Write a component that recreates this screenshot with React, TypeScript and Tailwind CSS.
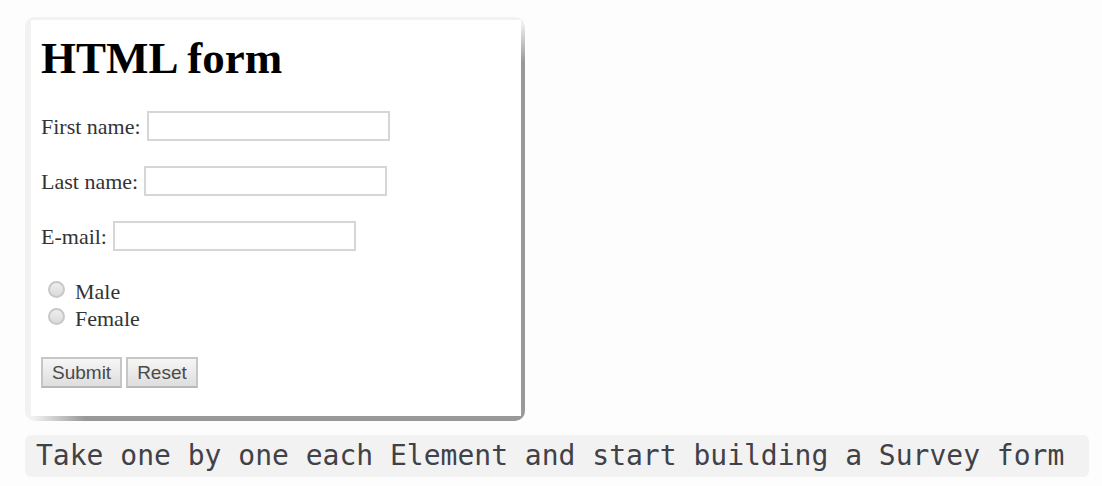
import type { ReactNode } from "react";

function TextField({ id, label }: { id: string; label: string }) {
  return (
    <div className="flex items-center gap-1.5">
      <label htmlFor={id}>{label}</label>
      <input
        id={id}
        name={id}
        type="text"
        className="h-[30px] w-[243px] min-w-0 border-2 border-[#d6d6d6] bg-white px-1 outline-none focus:border-[#8ab4f8]"
      />
    </div>
  );
}

function RadioOption({ value, label }: { value: string; label: string }) {
  return (
    <label className="flex items-center gap-2.5">
      <input
        type="radio"
        name="gender"
        value={value}
        className="mb-1 size-[17px] appearance-none rounded-full border-2 border-[#c8c8c8] bg-linear-to-b from-[#eeeeee] to-[#dadada] checked:border-4 checked:border-[#777777]"
      />
      {label}
    </label>
  );
}

function FormButton({ type, children }: { type: "submit" | "reset"; children: ReactNode }) {
  return (
    <button
      type={type}
      className="flex h-[31px] items-center border-2 border-[#c6c6c6] border-b-[#b8b8b8] bg-linear-to-b from-[#f6f6f6] to-[#dedede] px-[9px] font-['Liberation_Sans',sans-serif] text-[19px] leading-none text-[#4a4a4a]"
    >
      {children}
    </button>
  );
}

export default function App() {
  return (
    <main className="flex min-h-screen flex-col items-start bg-[#fdfdfd] pt-[17px] pr-[13px] pb-2 pl-[25px]">
      <section className="w-full max-w-[500px] rounded-[10px] bg-[#f2f2f2] bg-[linear-gradient(to_right,#f2f2f2_8px,#999999_60px),linear-gradient(to_bottom,#f0f0f0_6px,#999999_45px)] bg-[size:100%_6px,6px_100%] bg-[position:bottom,right] bg-no-repeat pt-[3px] pr-1 pb-[5px] pl-1.5">
        <form
          onSubmit={(event) => event.preventDefault()}
          className="bg-white px-2.5 pt-[13px] pb-7 font-['Liberation_Serif',serif] text-[22px] leading-[27px] text-[#333333]"
        >
          <h1 className="text-[45px] leading-[50px] font-bold text-black">HTML form</h1>
          <div className="mt-[28px] flex flex-col gap-[25px]">
            <TextField id="first-name" label="First name:" />
            <TextField id="last-name" label="Last name:" />
            <TextField id="email" label="E-mail:" />
          </div>
          <fieldset className="mt-[27px] pl-[7px]">
            <RadioOption value="male" label="Male" />
            <RadioOption value="female" label="Female" />
          </fieldset>
          <div className="mt-[25px] flex gap-1">
            <FormButton type="submit">Submit</FormButton>
            <FormButton type="reset">Reset</FormButton>
          </div>
        </form>
      </section>
      <code className="mt-[14px] w-full rounded-md bg-[#f2f2f2] px-[11px] font-['DejaVu_Sans_Mono',monospace] text-[28px] leading-[42px] text-[#414148]">
        Take one by one each Element and start building a Survey form
      </code>
    </main>
  );
}
